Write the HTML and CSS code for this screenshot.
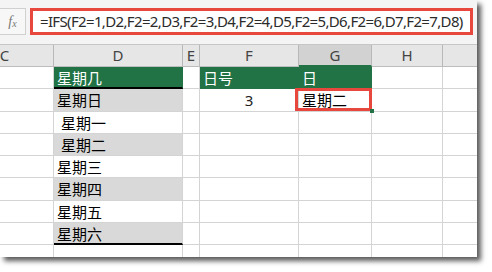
FILE: index.html
```html
<html>
<head>
	<link rel="stylesheet" href="styles.css">
	<title>IFS</title>
</head>
<body>
	<div class="window">
		<div class="formula-bar">
			<div class="fx"><i>f</i><span>x</span></div>
			<div class="formula">=IFS(F2=1,D2,F2=2,D3,F2=3,D4,F2=4,D5,F2=5,D6,F2=6,D7,F2=7,D8)</div>
		</div>
		<div class="sheet">
			<div class="grid">
				<div class="col">C</div>
				<div class="col">D</div>
				<div class="col">E</div>
				<div class="col">F</div>
				<div class="col sel">G</div>
				<div class="col">H</div>
				<div class="col"></div>

				<div class="c"></div>
				<div class="c head last">星期几</div>
				<div class="c"></div>
				<div class="c head">日号</div>
				<div class="c head">日</div>
				<div class="c"></div>
				<div class="c"></div>

				<div class="c"></div>
				<div class="c band">星期日</div>
				<div class="c"></div>
				<div class="c num">3</div>
				<div class="c active">星期二<span class="handle"></span></div>
				<div class="c"></div>
				<div class="c"></div>

				<div class="c"></div>
				<div class="c">&nbsp;星期一</div>
				<div class="c"></div>
				<div class="c"></div>
				<div class="c"></div>
				<div class="c"></div>
				<div class="c"></div>

				<div class="c"></div>
				<div class="c band">&nbsp;星期二</div>
				<div class="c"></div>
				<div class="c"></div>
				<div class="c"></div>
				<div class="c"></div>
				<div class="c"></div>

				<div class="c"></div>
				<div class="c">星期三</div>
				<div class="c"></div>
				<div class="c"></div>
				<div class="c"></div>
				<div class="c"></div>
				<div class="c"></div>

				<div class="c"></div>
				<div class="c band">星期四</div>
				<div class="c"></div>
				<div class="c"></div>
				<div class="c"></div>
				<div class="c"></div>
				<div class="c"></div>

				<div class="c"></div>
				<div class="c">星期五</div>
				<div class="c"></div>
				<div class="c"></div>
				<div class="c"></div>
				<div class="c"></div>
				<div class="c"></div>

				<div class="c"></div>
				<div class="c band last">星期六</div>
				<div class="c"></div>
				<div class="c"></div>
				<div class="c"></div>
				<div class="c"></div>
				<div class="c"></div>

				<div class="c"></div>
				<div class="c"></div>
				<div class="c"></div>
				<div class="c"></div>
				<div class="c"></div>
				<div class="c"></div>
				<div class="c"></div>
			</div>
		</div>
	</div>
</body>
</html>
```

FILE: styles.css
```css
body {
	margin: 0;
	background-color: #fff;
	font-family: "Noto Sans", "Noto Sans CJK SC", sans-serif;
}
.window {
	width: 477px;
	height: 257px;
	background-color: #fff;
	box-shadow: 4px 4px 5px rgba(0, 0, 0, 0.65);
	overflow: hidden;
}
.formula-bar {
	height: 45px;
	box-sizing: border-box;
	padding-top: 8px;
	display: flex;
	gap: 4px;
	background-color: #f4f4f4;
	border-bottom: 1px solid #c6c6c6;
}
.fx {
	width: 26px;
	height: 27px;
	box-sizing: border-box;
	border: 1px solid #d0d0d0;
	border-left: none;
	background-color: #f7f7f7;
	color: #777;
	font-family: "Liberation Serif", serif;
	font-size: 14px;
	display: flex;
	align-items: center;
	justify-content: center;
}
.fx span {
	font-size: 10px;
	font-style: italic;
	margin-top: 3px;
}
.formula {
	width: 443px;
	height: 27px;
	box-sizing: border-box;
	border: 3px solid #e8473e;
	background-color: #fff;
	color: #2b2b2b;
	font-size: 15px;
	letter-spacing: -0.65px;
	line-height: 20px;
	padding-left: 7px;
	white-space: nowrap;
	overflow: hidden;
}
.sheet {
	height: 212px;
	overflow: hidden;
}
.grid {
	margin-left: -44px;
	display: grid;
	grid-template-columns: 98px 129px 17px 99px 73px 71px 60px;
	grid-template-rows: 22px;
	grid-auto-rows: 22.25px;
}
.col {
	background-color: #e6e6e6;
	border-right: 1px solid #b8b8b8;
	border-bottom: 1px solid #bdbdbd;
	color: #444;
	font-size: 15px;
	line-height: 21px;
	text-align: center;
}
.col.sel {
	background-color: #d2d2d2;
	border-bottom: 2px solid #217346;
}
.c {
	border-right: 1px solid #d4d4d4;
	border-bottom: 1px solid #d4d4d4;
	font-size: 15px;
	line-height: 18px;
	padding: 2px 3px 0 3px;
	color: #000;
	white-space: pre;
	position: relative;
}
.head {
	background-color: #217346;
	border-right-color: #217346;
	border-bottom-color: #217346;
	color: #fff;
}
.band {
	background-color: #d9d9d9;
}
.last {
	border-bottom: 2px solid #000;
}
.num {
	text-align: center;
	color: #222;
}
.active::after {
	content: "";
	position: absolute;
	top: -1px;
	left: -4px;
	right: -1px;
	bottom: 0;
	border: 3px solid #e8473e;
}
.handle {
	position: absolute;
	right: -3px;
	bottom: -2px;
	width: 4px;
	height: 4px;
	background-color: #217346;
	z-index: 1;
}
```
